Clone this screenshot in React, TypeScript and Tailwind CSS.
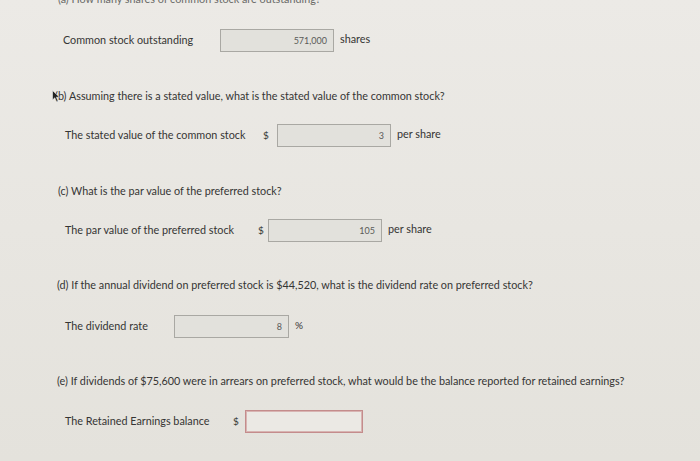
import React from "react";

function Box({ value, className = "", red = false }: { value?: string; className?: string; red?: boolean }) {
  return (
    <div
      className={`flex h-[23px] items-center justify-end border pr-[6px] text-[9px] ${
        red ? "border-[#c48c8c] bg-[#ebe9e4] shadow-[inset_0_0_0_1px_#d8b4b2]" : "border-[#a9a8a3] bg-[#e2e1dc]"
      } ${className}`}
    >
      {value && <span className="text-[#5a5a58]">{value}</span>}
    </div>
  );
}

export default function App() {
  return (
    <div className="relative h-[461px] w-[700px] overflow-hidden bg-gradient-to-b from-[#eceae6] via-[#e8e6e1] to-[#e4e2dc] font-['Lato','Noto_Sans',sans-serif] text-[10.8px] text-[#353534]">
      <div className="-mt-[7px] ml-[58px] h-[12px] leading-[12px] text-[#6a6a68]">
        (a) How many shares of common stock are outstanding?
      </div>

      <div className="mt-[24px] flex h-[23px] items-center">
        <span className="ml-[63px] w-[157px]">Common stock outstanding</span>
        <Box value="571,000" className="w-[114px]" />
        <span className="ml-[6px] -mt-[3px]">shares</span>
      </div>

      <div className="relative mt-[37px] ml-[55px] h-[14px] leading-[14px]">
        (b) Assuming there is a stated value, what is the stated value of the common stock?
        <svg className="absolute -left-[3px] top-[1px]" width="8" height="12" viewBox="0 0 8 12">
          <path d="M0.5 0.5 L0.5 10 L2.8 7.8 L4.5 11.5 L6 10.8 L4.3 7.2 L7.5 7.2 Z" fill="#222" stroke="#eee" strokeWidth="0.6" />
        </svg>
      </div>

      <div className="mt-[21px] flex h-[23px] items-center">
        <span className="ml-[65px] w-[198px]">The stated value of the common stock</span>
        <span className="w-[14px] text-[10px]">$</span>
        <Box value="3" className="w-[114px]" />
        <span className="ml-[6px] -mt-[3px]">per share</span>
      </div>

      <div className="mt-[37px] ml-[58px] h-[14px] leading-[14px]">(c) What is the par value of the preferred stock?</div>

      <div className="mt-[21px] flex h-[23px] items-center">
        <span className="ml-[65px] w-[193px]">The par value of the preferred stock</span>
        <span className="w-[10px] text-[10px]">$</span>
        <Box value="105" className="w-[114px]" />
        <span className="ml-[6px] -mt-[3px]">per share</span>
      </div>

      <div className="mt-[36px] ml-[57px] h-[14px] leading-[14px]">
        (d) If the annual dividend on preferred stock is $44,520, what is the dividend rate on preferred stock?
      </div>

      <div className="mt-[23px] flex h-[23px] items-center">
        <span className="ml-[65px] w-[109px]">The dividend rate</span>
        <Box value="8" className="w-[115px]" />
        <span className="ml-[6px] -mt-[3px] text-[10px]">%</span>
      </div>

      <div className="mt-[36px] ml-[57px] h-[14px] leading-[14px]">
        (e) If dividends of $75,600 were in arrears on preferred stock, what would be the balance reported for retained earnings?
      </div>

      <div className="mt-[22px] flex h-[23px] items-center">
        <span className="ml-[65px] w-[168px]">The Retained Earnings balance</span>
        <span className="w-[12px] text-[10px]">$</span>
        <Box red className="w-[118px]" />
      </div>
    </div>
  );
}
